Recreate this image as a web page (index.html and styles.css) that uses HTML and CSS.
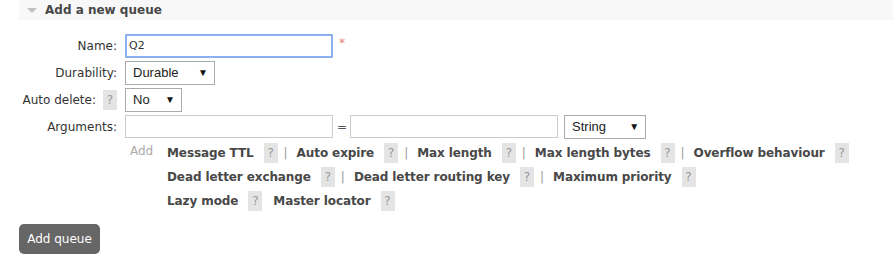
FILE: index.html
```html
<!DOCTYPE html>
<html>
<head>
<meta charset="utf-8">
<link rel="stylesheet" href="styles.css">
</head>
<body>
<div class="section">
  <div class="section-header"><span class="tri"></span><span class="title">Add a new queue</span></div>
  <div class="form">
    <div class="label">Name:</div>
    <div class="field first"><div class="input focused">Q2</div><span class="req">*</span></div>

    <div class="label">Durability:</div>
    <div class="field"><div class="select w-durable">Durable<span class="arrow">▼</span></div></div>

    <div class="label">Auto delete:<span class="help">?</span></div>
    <div class="field"><div class="select w-no">No<span class="arrow">▼</span></div></div>

    <div class="label">Arguments:</div>
    <div class="field"><div class="input"></div><span class="eq">=</span><div class="input"></div><div class="select w-string">String<span class="arrow">▼</span></div></div>

    <div class="label"></div>
    <div class="args">
      <span class="add">Add</span>
      <div class="arg-lines">
        <div class="arg-line">
          <span class="arg">Message TTL</span><span class="help">?</span><span class="sep">|</span>
          <span class="arg">Auto expire</span><span class="help">?</span><span class="sep">|</span>
          <span class="arg">Max length</span><span class="help">?</span><span class="sep">|</span>
          <span class="arg">Max length bytes</span><span class="help">?</span><span class="sep">|</span>
          <span class="arg">Overflow behaviour</span><span class="help">?</span>
        </div>
        <div class="arg-line">
          <span class="arg">Dead letter exchange</span><span class="help">?</span><span class="sep">|</span>
          <span class="arg">Dead letter routing key</span><span class="help">?</span><span class="sep">|</span>
          <span class="arg">Maximum priority</span><span class="help">?</span>
        </div>
        <div class="arg-line">
          <span class="arg">Lazy mode</span><span class="help">?</span>
          <span class="arg gap">Master locator</span><span class="help">?</span>
        </div>
      </div>
    </div>
  </div>
  <button class="btn">Add queue</button>
</div>
</body>
</html>
```

FILE: styles.css
```css
html, body {
  margin: 0;
  padding: 0;
  background: #fff;
}
body {
  font-family: "DejaVu Sans", Verdana, sans-serif;
  font-size: 12px;
  color: #484848;
}
.section {
  padding-left: 19px;
}
.section-header {
  height: 20px;
  background: #f8f8f8;
  display: flex;
  align-items: center;
  padding-left: 8px;
}
.tri {
  width: 0;
  height: 0;
  border-left: 5px solid transparent;
  border-right: 5px solid transparent;
  border-top: 5px solid #c0c0c0;
  margin-right: 8px;
}
.title {
  font-weight: bold;
  font-size: 12px;
  color: #484848;
}
.form {
  display: grid;
  grid-template-columns: 98px 1fr;
  column-gap: 8px;
  row-gap: 4px;
  margin-top: 14px;
  align-items: center;
}
.label {
  display: flex;
  justify-content: flex-end;
  align-items: center;
  white-space: nowrap;
  color: #333;
}
.field {
  display: flex;
  align-items: center;
  height: 23px;
}
.field.first {
  align-items: flex-start;
}
.input {
  box-sizing: border-box;
  width: 208px;
  height: 23px;
  border: 1px solid #ccc;
  background: #fff;
  padding: 3px 5px;
  font-size: 11px;
  color: #333;
}
.input.focused {
  height: 24px;
  border: 2px solid #8ab1ee;
  padding: 3px 2px;
  border-radius: 1px;
}
.req {
  color: #f08080;
  margin-left: 6px;
  margin-top: 2px;
  font-size: 12px;
}
.eq {
  margin: 0 3px 0 4px;
  color: #555;
}
.select {
  box-sizing: border-box;
  height: 24px;
  border: 1px solid #aaa;
  background: #fff;
  display: flex;
  align-items: center;
  justify-content: space-between;
  padding: 0 6px 0 7px;
  font-family: "Liberation Sans", Arial, sans-serif;
  font-size: 13px;
  color: #222;
}
.arrow {
  font-size: 10px;
  color: #111;
}
.w-durable { width: 90px; }
.w-no { width: 57px; }
.w-string { width: 82px; margin-left: 6px; }
.help {
  display: inline-flex;
  align-items: center;
  justify-content: center;
  width: 14px;
  height: 20px;
  background: #e4e4e4;
  color: #999;
  font-weight: normal;
  margin-left: 7px;
  font-size: 12px;
}
.args {
  display: flex;
  align-items: flex-start;
  margin-top: 1px;
}
.add {
  color: #aaa;
  margin-left: 5px;
  width: 37px;
  line-height: 16px;
}
.arg-lines {
  display: flex;
  flex-direction: column;
  gap: 4px;
}
.arg-line {
  display: flex;
  align-items: center;
  height: 20px;
}
.arg {
  font-weight: bold;
  color: #484848;
  letter-spacing: -0.1px;
}
.arg-line .help {
  margin-left: 10px;
}
.sep {
  color: #999;
  margin: 0 9px 0 6px;
}
.arg.gap {
  margin-left: 11px;
}
.btn {
  display: block;
  margin-top: 13px;
  background: #666;
  color: #fff;
  border: none;
  border-radius: 5px;
  font-family: "DejaVu Sans", Verdana, sans-serif;
  font-size: 12px;
  height: 30px;
  width: 81px;
  padding: 0;
}
```
